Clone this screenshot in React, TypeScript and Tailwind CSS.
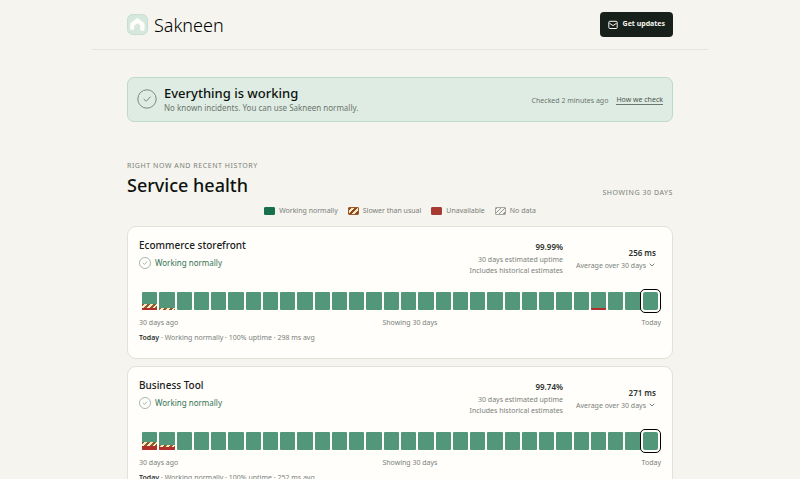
type Day = { slow: number; down: number };

type Service = {
  name: string;
  uptime: string;
  latency: string;
  summary: string;
  incidents: Record<number, Day>;
};

const DAY_COUNT = 30;

const services: Service[] = [
  {
    name: "Ecommerce storefront",
    uptime: "99.99%",
    latency: "256 ms",
    summary: "Working normally · 100% uptime · 298 ms avg",
    incidents: { 0: { slow: 4, down: 2 }, 1: { slow: 2, down: 0 }, 26: { slow: 0, down: 2 } },
  },
  {
    name: "Business Tool",
    uptime: "99.74%",
    latency: "271 ms",
    summary: "Working normally · 100% uptime · 252 ms avg",
    incidents: { 0: { slow: 4, down: 4 }, 1: { slow: 2, down: 3 } },
  },
];

const legend = [
  { label: "Working normally", swatch: "bg-[#17704c] border-[#17704c]" },
  {
    label: "Slower than usual",
    swatch:
      "border-[#9a5a2c] bg-[repeating-linear-gradient(135deg,#8f4a1c_0px,#8f4a1c_2px,#fbe9c8_2px,#fbe9c8_4px)]",
  },
  { label: "Unavailable", swatch: "bg-[#a83a32] border-[#a04038]" },
  {
    label: "No data",
    swatch:
      "border-[#a3a7a1] bg-[repeating-linear-gradient(135deg,#92968f_0px,#92968f_1px,#f5f4ee_1px,#f5f4ee_3px)]",
  },
];

function CheckCircle({ className }: { className: string }) {
  return (
    <svg viewBox="0 0 20 20" fill="none" stroke="currentColor" className={className} aria-hidden="true">
      <circle cx="10" cy="10" r="9.2" />
      <path d="M7 10.2l2.2 2.1 4-4.3" strokeLinecap="round" strokeLinejoin="round" />
    </svg>
  );
}

function Logo() {
  return (
    <svg viewBox="0 0 21 21" className="size-[21px]" aria-hidden="true">
      <rect x="0.5" y="0.5" width="20" height="20" rx="5" fill="#d6e8dd" stroke="#c6dfd0" />
      <path
        d="M3.8 15.6V9.4L10.3 4.4l6.7 5v6.8h-3.2v-4.8l-3.4-2.6-3.2 2.4-1 4.4z"
        fill="#fffefa"
        stroke="#fffefa"
        strokeLinejoin="round"
      />
    </svg>
  );
}

function DayBar({ day, index }: { day?: Day; index: number }) {
  const today = index === DAY_COUNT - 1;
  return (
    <button
      type="button"
      aria-label={today ? "Today" : `${DAY_COUNT - index} days ago`}
      aria-pressed={today}
      className={
        "flex h-[18px] min-w-0 flex-1 flex-col justify-end overflow-hidden bg-[#52977a] " +
        (today ? "z-10 rounded-[2px] ring-2 ring-[#fffefa] outline outline-offset-2 outline-black" : "rounded-[1px]")
      }
    >
      {day && (
        <>
          <span
            style={{ height: day.slow }}
            className="block w-full bg-[repeating-linear-gradient(135deg,#8f5a2c_0px,#8f5a2c_2px,#fbe9c8_2px,#fbe9c8_4px)]"
          />
          <span style={{ height: day.down }} className="block w-full bg-[#b02f2a]" />
        </>
      )}
    </button>
  );
}

function ServiceCard({ service }: { service: Service }) {
  return (
    <article className="rounded-[9px] border border-[#e2e2da] bg-[#fffefb] px-[11px] pt-[11px] pb-[14px]">
      <div className="flex items-start justify-between">
        <div>
          <h3 className="text-[10px] leading-[14px] font-medium text-[#18201b]">{service.name}</h3>
          <p className="mt-1 flex items-center gap-1 text-[8px] leading-[14px] text-[#2f7352]">
            <CheckCircle className="size-3 text-[#6f8c7d]" />
            Working normally
          </p>
        </div>
        <div className="flex items-center gap-[13px] pr-[5px] text-right text-[7px] text-[#7b807a]">
          <div className="pt-[2px]">
            <p className="text-[8px] leading-[14px] font-semibold text-[#2b312d]">{service.uptime}</p>
            <p className="leading-[11px]">30 days estimated uptime</p>
            <p className="leading-[11px]">Includes historical estimates</p>
          </div>
          <button type="button" className="pt-[2px] text-right">
            <span className="block text-[8px] leading-[14px] font-semibold text-[#2b312d]">{service.latency}</span>
            <span className="flex items-center gap-[2px] leading-[11px]">
              Average over 30 days
              <svg viewBox="0 0 8 8" fill="none" stroke="currentColor" className="size-2" aria-hidden="true">
                <path d="M2 3l2 2 2-2" strokeLinecap="round" strokeLinejoin="round" />
              </svg>
            </span>
          </button>
        </div>
      </div>
      <div className="mt-4 flex gap-[2px] px-[3px]">
        {Array.from({ length: DAY_COUNT }, (_, i) => (
          <DayBar key={i} index={i} day={service.incidents[i]} />
        ))}
      </div>
      <div className="mt-[7px] flex justify-between text-[7px] leading-3 text-[#7b807a]">
        <span>30 days ago</span>
        <span>Showing 30 days</span>
        <span>Today</span>
      </div>
      <p className="mt-[3px] text-[7px] leading-3 text-[#7b807a]">
        <strong className="font-semibold text-[#2b312d]">Today</strong> · {service.summary}
      </p>
    </article>
  );
}

export default function App() {
  return (
    <div className="min-h-screen bg-[#f5f4ee] font-['Noto_Sans',sans-serif] text-[#18201b]">
      <div className="mx-auto max-w-[616px]">
        <header className="flex items-center justify-between border-b border-[#e4e5df] px-[35px] py-3">
          <a href="#" className="flex items-center gap-[6px] text-[18px] leading-6 font-light text-black">
            <Logo />
            Sakneen
          </a>
          <button
            type="button"
            className="flex h-[25px] items-center gap-[5px] rounded-[4px] bg-[#18201b] px-2 text-[7px] font-bold text-[#f5f4ee]"
          >
            <svg viewBox="0 0 10 10" fill="none" stroke="currentColor" className="size-[10px]" aria-hidden="true">
              <rect x="0.8" y="1.3" width="8.4" height="7.2" rx="1" />
              <path d="M1.4 3.2L5 5.6l3.6-2.4" strokeLinejoin="round" />
            </svg>
            Get updates
          </button>
        </header>

        <main className="px-[35px] pt-[27px] pb-8">
          <section className="flex items-center justify-between rounded-[7px] border border-[#bcdac9] bg-[#dfece3] px-[9px] pt-[6px] pb-[7px]">
            <div className="flex items-center gap-[7px]">
              <CheckCircle className="size-5 text-[#758a7d]" />
              <div>
                <h1 className="text-[13px] leading-[18px] font-medium text-[#0d120f]">Everything is working</h1>
                <p className="text-[8px] leading-3 text-[#6c756e]">No known incidents. You can use Sakneen normally.</p>
              </div>
            </div>
            <div className="flex items-center gap-2 pt-[2px] text-[7px] leading-[9px] text-[#6c756e]">
              <span>Checked 2 minutes ago</span>
              <a href="#" className="border-b border-[#6c756e] text-[#4a554d]">
                How we check
              </a>
            </div>
          </section>

          <div className="mt-[38px] flex items-end justify-between">
            <div>
              <p className="text-[7px] leading-3 tracking-[0.08em] text-[#7b807a] uppercase">Right now and recent history</p>
              <h2 className="mt-[1px] text-[18px] leading-6 font-medium text-[#0d120f]">Service health</h2>
            </div>
            <p className="text-[7px] leading-[9px] tracking-[0.08em] text-[#7b807a] uppercase">Showing 30 days</p>
          </div>

          <ul className="mt-2 flex justify-center gap-[10px] text-[7px] leading-3 text-[#7b807a]">
            {legend.map((item) => (
              <li key={item.label} className="flex items-center gap-1">
                <span className={"h-2 w-[11px] rounded-[1px] border " + item.swatch} />
                {item.label}
              </li>
            ))}
          </ul>

          <div className="mt-[9px] flex flex-col gap-[7px]">
            {services.map((service) => (
              <ServiceCard key={service.name} service={service} />
            ))}
          </div>
        </main>
      </div>
    </div>
  );
}
